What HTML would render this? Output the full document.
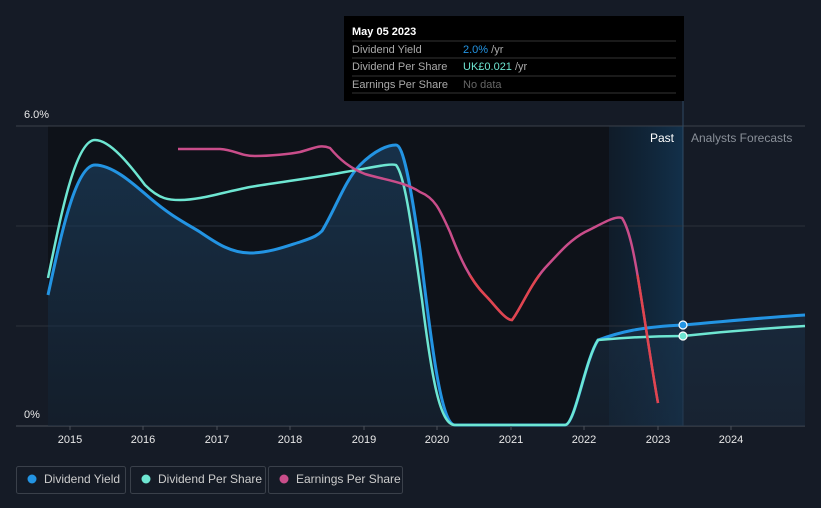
<!DOCTYPE html>
<html><head><style>
body{margin:0;background:#151b26;font-family:"Liberation Sans",sans-serif;}
svg{display:block}
</style></head><body>
<svg width="821" height="508" xmlns="http://www.w3.org/2000/svg">
<defs>
<linearGradient id="hl" x1="0" x2="1" y1="0" y2="0"><stop offset="0" stop-color="#11263a" stop-opacity="0.5"/><stop offset="1" stop-color="#12304a"/></linearGradient>
<linearGradient id="fa" x1="0" x2="0" y1="0" y2="1"><stop offset="0" stop-color="#1b3d5c" stop-opacity="0.9"/><stop offset="1" stop-color="#1a2b3e" stop-opacity="0.6"/></linearGradient>
<clipPath id="low"><rect x="0" y="275" width="821" height="200"/></clipPath>
</defs>
<rect width="821" height="508" fill="#151b26"/>
<rect x="48" y="126" width="635" height="300" fill="#0e1219"/>
<rect x="609" y="126" width="74" height="300" fill="url(#hl)"/>
<line x1="16" y1="126" x2="805" y2="126" stroke="#3a404a"/>
<line x1="16" y1="226" x2="805" y2="226" stroke="#2a303a"/>
<line x1="16" y1="326" x2="805" y2="326" stroke="#2a303a"/>
<line x1="16" y1="426" x2="805" y2="426" stroke="#4a505a"/>
<line x1="683" y1="100" x2="683" y2="426" stroke="#2f4a64"/>
<path d="M48,295 C60,240 75,165 95,165 C115,165 140,190 150,198 C170,215 180,220 200,232 C215,242 230,253 250,253 C270,253 290,245 300,242 C315,237 318,235 322,231 C335,210 345,180 360,165 C375,150 388,145 396,145 C403,145 410,180 420,250 C430,330 440,425 455,425 L565,425 C575,425 585,360 598,340 C620,332 640,327 683,325 C730,321 770,317 805,315 L805,426 L48,426 Z" fill="url(#fa)" opacity="0.8"/>
<path d="M48,295 C60,240 75,165 95,165 C115,165 140,190 150,198 C170,215 180,220 200,232 C215,242 230,253 250,253 C270,253 290,245 300,242 C315,237 318,235 322,231 C335,210 345,180 360,165 C375,150 388,145 396,145 C403,145 410,180 420,250 C430,330 440,425 455,425 L565,425 C575,425 585,360 598,340 C620,332 640,327 683,325 C730,321 770,317 805,315" fill="none" stroke="#2394e3" stroke-width="3"/>
<path d="M48,278 C60,220 75,140 95,140 C110,140 130,165 145,185 C160,200 170,200 180,200 C200,200 220,193 250,187 C280,182 320,177 345,172 C370,168 390,163 396,165 C405,175 412,230 422,300 C432,380 440,425 455,425 L565,425 C575,425 585,360 598,340 C620,338 650,336 683,336 C730,331 770,328 805,326" fill="none" stroke="#6ee6d2" stroke-width="2.5"/>
<path d="M178,149 L220,149 C235,150 240,156 255,156 C270,156 290,154 300,152 C315,148 320,144 330,148 C340,160 350,168 365,174 C385,180 405,182 420,192 C435,198 440,210 450,232 C460,258 470,280 485,295 C495,305 505,320 512,320 C520,310 530,285 545,268 C560,252 570,240 585,232 C600,225 615,215 622,218 C630,230 635,260 638,278 C645,320 652,370 658,403" fill="none" stroke="#c94d8a" stroke-width="2.5"/>
<path clip-path="url(#low)" d="M178,149 L220,149 C235,150 240,156 255,156 C270,156 290,154 300,152 C315,148 320,144 330,148 C340,160 350,168 365,174 C385,180 405,182 420,192 C435,198 440,210 450,232 C460,258 470,280 485,295 C495,305 505,320 512,320 C520,310 530,285 545,268 C560,252 570,240 585,232 C600,225 615,215 622,218 C630,230 635,260 638,278 C645,320 652,370 658,403" fill="none" stroke="#e0454f" stroke-width="2.5"/>
<circle cx="683" cy="325" r="4" fill="#2394e3" stroke="#fff" stroke-width="1.2"/>
<circle cx="683" cy="336" r="4" fill="#6ee6d2" stroke="#fff" stroke-width="1.2"/>
<text x="24" y="118" fill="#e8e8e8" font-size="11">6.0%</text>
<text x="24" y="418" fill="#e8e8e8" font-size="11">0%</text>
<text x="674" y="142" fill="#ffffff" font-size="12" text-anchor="end">Past</text>
<text x="691" y="142" fill="#8a9099" font-size="12">Analysts Forecasts</text>
<g fill="#e8e8e8" font-size="11" text-anchor="middle">
<text x="70" y="443">2015</text><text x="143" y="443">2016</text><text x="217" y="443">2017</text><text x="290" y="443">2018</text><text x="364" y="443">2019</text><text x="437" y="443">2020</text><text x="511" y="443">2021</text><text x="584" y="443">2022</text><text x="658" y="443">2023</text><text x="731" y="443">2024</text>
</g>
<g stroke="#4a505a"><line x1="70" y1="426" x2="70" y2="430"/><line x1="143" y1="426" x2="143" y2="430"/><line x1="217" y1="426" x2="217" y2="430"/><line x1="290" y1="426" x2="290" y2="430"/><line x1="364" y1="426" x2="364" y2="430"/><line x1="437" y1="426" x2="437" y2="430"/><line x1="511" y1="426" x2="511" y2="430"/><line x1="584" y1="426" x2="584" y2="430"/><line x1="658" y1="426" x2="658" y2="430"/><line x1="731" y1="426" x2="731" y2="430"/></g>
<rect x="344" y="16" width="340" height="85" fill="#000"/>
<text x="352" y="35" fill="#fff" font-size="11" font-weight="bold">May 05 2023</text>
<g stroke="#333"><line x1="352" y1="41" x2="676" y2="41"/><line x1="352" y1="58" x2="676" y2="58"/><line x1="352" y1="76" x2="676" y2="76"/><line x1="352" y1="93" x2="676" y2="93"/></g>
<g font-size="11"><text x="352" y="53" fill="#aaa">Dividend Yield</text><text x="463" y="53" fill="#2394e3">2.0%<tspan fill="#aaa"> /yr</tspan></text>
<text x="352" y="70" fill="#aaa">Dividend Per Share</text><text x="463" y="70" fill="#6ee6d2">UK£0.021<tspan fill="#aaa"> /yr</tspan></text>
<text x="352" y="88" fill="#aaa">Earnings Per Share</text><text x="463" y="88" fill="#666">No data</text></g>
<g font-size="12" fill="#ccc">
<rect x="16.5" y="466.5" width="109" height="27" rx="2" fill="none" stroke="#3a404a"/><circle cx="32" cy="479" r="4.5" fill="#2394e3"/><text x="44" y="483">Dividend Yield</text>
<rect x="130.5" y="466.5" width="135" height="27" rx="2" fill="none" stroke="#3a404a"/><circle cx="146" cy="479" r="4.5" fill="#6ee6d2"/><text x="158" y="483">Dividend Per Share</text>
<rect x="268.5" y="466.5" width="134" height="27" rx="2" fill="none" stroke="#3a404a"/><circle cx="284" cy="479" r="4.5" fill="#c94d8a"/><text x="296" y="483">Earnings Per Share</text>
</g>
</svg>
</body></html>
